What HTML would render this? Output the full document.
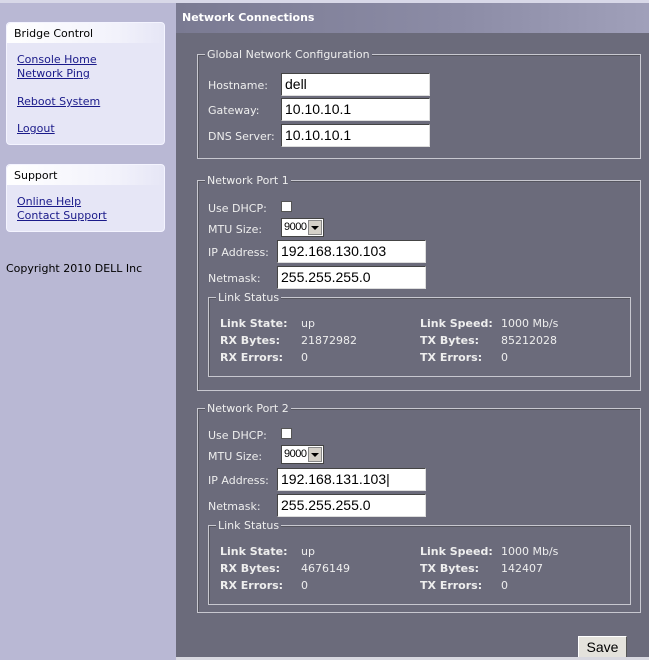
<!DOCTYPE html>
<html><head><style>
*{margin:0;padding:0;box-sizing:border-box}
body{width:649px;height:660px;position:relative;overflow:hidden;background:#6b6b7b;font-family:"DejaVu Sans",sans-serif;font-size:11px;color:#eee}
.a{position:absolute}
#side{left:0;top:0;width:176px;height:660px;background:#b9b8d4}
#top{left:0;top:0;width:649px;height:3px;background:#d8d8e8}
#hdr{left:176px;top:3px;width:473px;height:30px;background:linear-gradient(90deg,#7a7a92,#8c8ca6 60%,#a0a0ba);color:#fff;font-weight:bold;font-size:11px;padding:8px 6px}
.box{background:#e6e6f6;border-radius:4px;border:1px solid #f4f4ff}
.box .t{height:20px;background:linear-gradient(90deg,#fff,#f2f2fb 70%,#e6e6f6);color:#000;padding:4px 7px 0;border-radius:4px 4px 0 0}
.box a{color:#1a1a8a;text-decoration:underline;display:block;line-height:14px}
fieldset{position:absolute;border:1px solid #c8c8d0;box-shadow:inset 1px 1px 0 #55555f}
.lg{position:absolute;background:#6b6b7b;padding:0 2px;color:#eee;line-height:12px}
.lbl{position:absolute;color:#eee;margin-top:1px}
.in{position:absolute;background:#fff;border:1px solid #444;border-right-color:#ddd;border-bottom-color:#ddd;color:#000;font-family:"Liberation Sans",sans-serif;font-size:14px;padding:2px 3px;line-height:17px}
.cb{position:absolute;width:11px;height:11px;background:#fff;border:1px solid #555}
.sel{position:absolute;width:43px;height:19px;background:#fff;border:1px solid #444;color:#000;font-family:"Liberation Sans",sans-serif;font-size:11px;padding:2px 2px;letter-spacing:-0.5px}
.sel i{position:absolute;right:1px;top:1px;width:14px;height:15px;background:#d4d0c8;border:1px solid #888}
.sel i:after{content:"";position:absolute;left:2px;top:5px;border:4px solid transparent;border-top:4px solid #000;border-bottom:0}
.b{position:absolute;font-weight:bold;color:#eee;margin-top:1px}
</style></head><body>
<div id="side" class="a"></div>
<div id="top" class="a"></div>
<div id="hdr" class="a">Network Connections</div>

<div class="a box" style="left:6px;top:22px;width:159px;height:123px">
<div class="t">Bridge Control</div>
<div style="padding:10px 10px">
<a>Console Home</a><a>Network Ping</a><a style="margin-top:14px">Reboot System</a><a style="margin-top:13px">Logout</a></div></div>
<div class="a box" style="left:6px;top:164px;width:159px;height:68px">
<div class="t">Support</div>
<div style="padding:10px 10px"><a>Online Help</a><a>Contact Support</a></div></div>
<div class="a" style="left:6px;top:262px;color:#000">Copyright 2010 DELL Inc</div>

<fieldset style="left:197px;top:54px;width:444px;height:105px"></fieldset>
<div class="lg" style="left:205px;top:49px">Global Network Configuration</div>
<div class="lbl" style="left:208px;top:78px">Hostname:</div>
<div class="lbl" style="left:208px;top:103px">Gateway:</div>
<div class="lbl" style="left:208px;top:129px">DNS Server:</div>
<div class="in" style="left:281px;top:73px;width:149px;height:23px">dell</div>
<div class="in" style="left:281px;top:98px;width:149px;height:23px">10.10.10.1</div>
<div class="in" style="left:281px;top:124px;width:149px;height:23px">10.10.10.1</div>

<fieldset style="left:197px;top:180px;width:444px;height:211px"></fieldset>
<div class="lg" style="left:205px;top:175px">Network Port 1</div>
<div class="lbl" style="left:208px;top:201px">Use DHCP:</div><div class="cb" style="left:281px;top:201px"></div>
<div class="lbl" style="left:208px;top:222px">MTU Size:</div><div class="sel" style="left:281px;top:218px">9000<i></i></div>
<div class="lbl" style="left:208px;top:245px">IP Address:</div><div class="in" style="left:277px;top:240px;width:149px;height:23px">192.168.130.103</div>
<div class="lbl" style="left:208px;top:271px">Netmask:</div><div class="in" style="left:277px;top:266px;width:149px;height:23px">255.255.255.0</div>
<fieldset style="left:208px;top:297px;width:423px;height:80px"></fieldset>
<div class="lg" style="left:216px;top:292px">Link Status</div>
<div class="b" style="left:220px;top:316px">Link State:</div><div class="lbl" style="left:301px;top:316px">up</div>
<div class="b" style="left:220px;top:333px">RX Bytes:</div><div class="lbl" style="left:301px;top:333px">21872982</div>
<div class="b" style="left:220px;top:350px">RX Errors:</div><div class="lbl" style="left:301px;top:350px">0</div>
<div class="b" style="left:420px;top:316px">Link Speed:</div><div class="lbl" style="left:501px;top:316px">1000 Mb/s</div>
<div class="b" style="left:420px;top:333px">TX Bytes:</div><div class="lbl" style="left:501px;top:333px">85212028</div>
<div class="b" style="left:420px;top:350px">TX Errors:</div><div class="lbl" style="left:501px;top:350px">0</div>

<fieldset style="left:197px;top:408px;width:444px;height:205px"></fieldset>
<div class="lg" style="left:205px;top:403px">Network Port 2</div>
<div class="lbl" style="left:208px;top:428px">Use DHCP:</div><div class="cb" style="left:281px;top:428px"></div>
<div class="lbl" style="left:208px;top:449px">MTU Size:</div><div class="sel" style="left:281px;top:445px">9000<i></i></div>
<div class="lbl" style="left:208px;top:473px">IP Address:</div><div class="in" style="left:277px;top:468px;width:149px;height:23px">192.168.131.103|</div>
<div class="lbl" style="left:208px;top:499px">Netmask:</div><div class="in" style="left:277px;top:494px;width:149px;height:23px">255.255.255.0</div>
<fieldset style="left:208px;top:525px;width:423px;height:80px"></fieldset>
<div class="lg" style="left:216px;top:520px">Link Status</div>
<div class="b" style="left:220px;top:544px">Link State:</div><div class="lbl" style="left:301px;top:544px">up</div>
<div class="b" style="left:220px;top:561px">RX Bytes:</div><div class="lbl" style="left:301px;top:561px">4676149</div>
<div class="b" style="left:220px;top:578px">RX Errors:</div><div class="lbl" style="left:301px;top:578px">0</div>
<div class="b" style="left:420px;top:544px">Link Speed:</div><div class="lbl" style="left:501px;top:544px">1000 Mb/s</div>
<div class="b" style="left:420px;top:561px">TX Bytes:</div><div class="lbl" style="left:501px;top:561px">142407</div>
<div class="b" style="left:420px;top:578px">TX Errors:</div><div class="lbl" style="left:501px;top:578px">0</div>

<div class="a" style="left:578px;top:636px;width:49px;height:22px;background:#e4e2dc;border:1px solid #fff;border-right-color:#555;border-bottom-color:#555;color:#000;font-family:'Liberation Sans',sans-serif;font-size:14px;text-align:center;line-height:21px">Save</div>
<div class="a" style="left:176px;top:657px;width:473px;height:3px;background:#d8d8e0"></div>
</body></html>
